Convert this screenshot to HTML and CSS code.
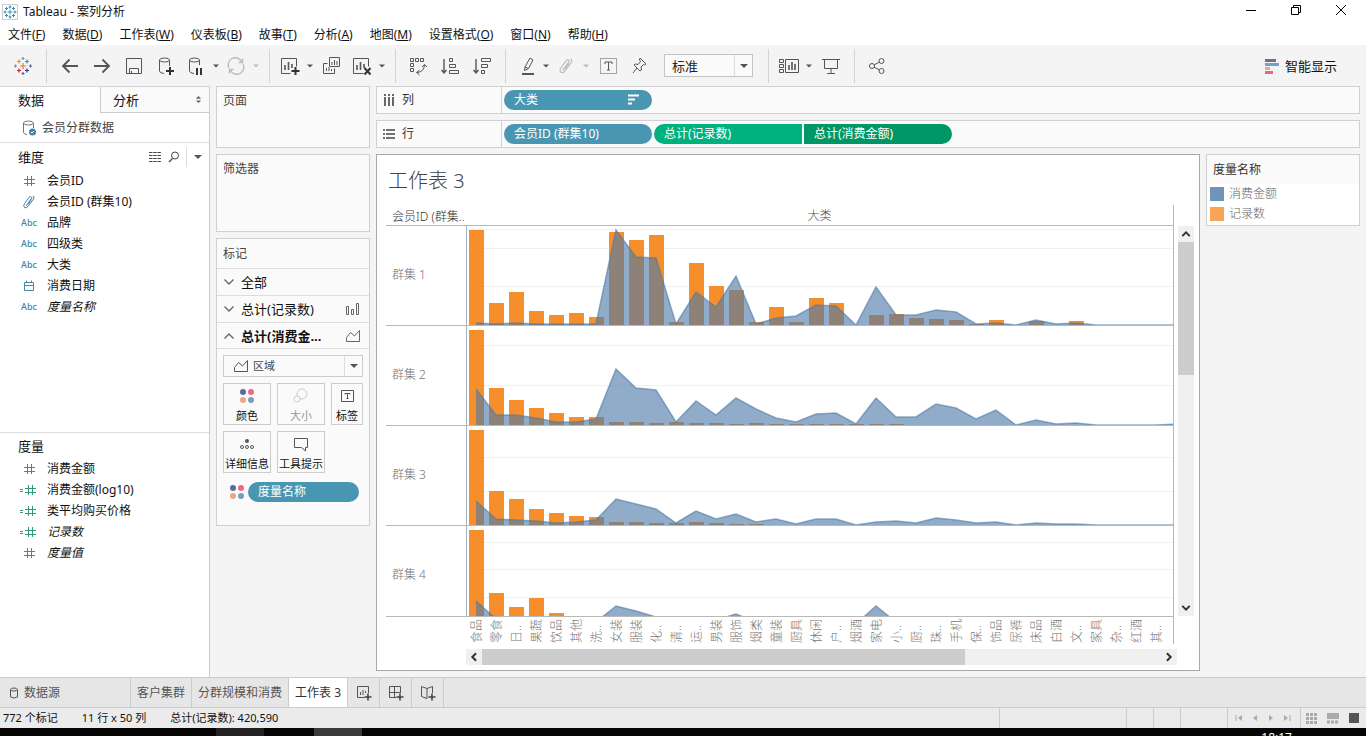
FILE: index.html
```html
<!DOCTYPE html>
<html lang="zh-CN">
<head>
<meta charset="utf-8">
<title>Tableau - 案列分析</title>
<link rel="stylesheet" href="styles.css">
</head>
<body>
<svg class="defs" aria-hidden="true">
  <symbol id="hash" viewBox="0 0 12 12"><path d="M4.500 1V11M8.500 1V11M1 4.500H12M1 8.500H12" fill="none" stroke="currentColor"/></symbol>
  <symbol id="calc" viewBox="0 0 18 12"><path d="M8.500 1V11M12.500 1V11M5 4.500H16M5 8.500H16M0 5.500H3M0 7.500H3" fill="none" stroke="currentColor"/></symbol>
  <symbol id="clip" viewBox="0 0 14 14"><path d="M4 11L9 4Q10.500 2.500 9.500 2Q8 1 7 2.500L2.500 8.500Q1 11 2.500 12.500Q4.500 13.500 6 11.500L11.500 4Q13 1.500 11 .8M6 9.500L9.500 4.500" fill="none" stroke="currentColor"/></symbol>
  <symbol id="caret" viewBox="0 0 8 8"><path d="M0 2H8L4 6Z" fill="currentColor"/></symbol>
  <symbol id="dots" viewBox="0 0 16 16"><circle cx="4" cy="4" r="3" fill="#5b6c99"/><circle cx="12" cy="4" r="3" fill="#ea6b7e"/><circle cx="4" cy="12" r="3" fill="#f0a57c"/><circle cx="12" cy="12" r="3" fill="#7b9cc0"/></symbol>
  <symbol id="area" viewBox="0 0 16 14"><path d="M1.500 12.500V8.500L5.500 3.500L9.500 7L14.500 1.500V12.500Z" fill="none" stroke="currentColor"/></symbol>
  <symbol id="down" viewBox="0 0 12 12"><path d="M1.500 3.500L6 8L10.500 3.500" fill="none" stroke="currentColor"/></symbol>
</svg>

<header class="titlebar">
  <svg class="app-icon" viewBox="0 0 16 16"><path d="M.5 15.500V.5H15.500V15.500Z" fill="#fff" stroke="#ccc"/><path d="M8 5.500V10.500M5.500 8H10.500M8 1.500V4.500M6.500 3H9.500M8 11.500V14.500M6.500 13H9.500M1.500 8H4.500M3 6.500V9.500M11.500 8H14.500M13 6.500V9.500M4.500 3V6M3 4.500H6M11.500 3V6M10 4.500H13M4.500 10V13M3 11.500H6M11.500 10V13M10 11.500H13" stroke="#3e8ab0" fill="none"/></svg>
  <h1>Tableau - 案列分析</h1>
  <div class="window-buttons">
    <button aria-label="最小化"><svg viewBox="0 0 12 12"><path d="M1 6.500H11" stroke="#000"/></svg></button>
    <button aria-label="还原"><svg viewBox="0 0 12 12"><path d="M1.500 3.500H8.500V10.500H1.500ZM3.500 3.500V1.500H10.500V8.500H8.500" fill="none" stroke="#000"/></svg></button>
    <button aria-label="关闭"><svg viewBox="0 0 12 12"><path d="M1 1L11 11M11 1L1 11" stroke="#000"/></svg></button>
  </div>
</header>

<nav class="menubar">
  <button>文件(<u>F</u>)</button><button>数据(<u>D</u>)</button><button>工作表(<u>W</u>)</button><button>仪表板(<u>B</u>)</button><button>故事(<u>T</u>)</button><button>分析(<u>A</u>)</button><button>地图(<u>M</u>)</button><button>设置格式(<u>O</u>)</button><button>窗口(<u>N</u>)</button><button>帮助(<u>H</u>)</button>
</nav>

<div class="toolbar">
  <button class="tool home" aria-label="开始页面"><svg viewBox="0 0 20 20"><g fill="none" stroke-width="1.200"><path d="M10 7V13M7 10H13" stroke="#e8762d"/><path d="M6 3.500V7.500M4 5.500H8" stroke="#eb912c"/><path d="M14 3.500V7.500M12 5.500H16" stroke="#59879b"/><path d="M6 12.500V16.500M4 14.500H8" stroke="#c72035"/><path d="M14 12.500V16.500M12 14.500H16" stroke="#1f457e"/><path d="M10 1V4M8.500 2.500H11.500" stroke="#7099a6"/><path d="M10 16V19M8.500 17.500H11.500" stroke="#5b6591"/><path d="M2.500 8.500V11.500M1 10H4" stroke="#7c86a8"/><path d="M17.500 8.500V11.500M16 10H19" stroke="#5b6591"/></g></svg></button>
  <span class="sep first"></span>
  <button class="tool" aria-label="撤消"><svg viewBox="0 0 20 20"><path d="M18 10H3M9.500 3.500L3 10L9.500 16.500" stroke-width="1.800"/></svg></button>
  <button class="tool" aria-label="重做"><svg viewBox="0 0 20 20"><path d="M2 10H17M10.500 3.500L17 10L10.500 16.500" stroke-width="1.800"/></svg></button>
  <button class="tool" aria-label="保存"><svg viewBox="0 0 20 20"><path d="M2.500 2.500H17.500V17.500H2.500ZM5.500 17.500V12.500H14.500V17.500M7.500 15V17.500"/></svg></button>
  <button class="tool" aria-label="新建数据源"><svg viewBox="0 0 20 20"><path d="M8 17.500Q3.500 17 3.500 15V4M13.500 4V10"/><ellipse cx="8.500" cy="4" rx="5" ry="2"/><path d="M14 11V19M10 15H18" stroke="#333" stroke-width="2"/></svg></button>
  <button class="tool narrow" aria-label="暂停自动更新"><svg viewBox="0 0 20 20"><path d="M8 17.500Q3.500 17 3.500 15V4M13.500 4V9"/><ellipse cx="8.500" cy="4" rx="5" ry="2"/><path d="M11 12V19M15 12V19" stroke="#333" stroke-width="2"/></svg></button>
  <button class="caret" aria-label="更新选项"><svg><use href="#caret"/></svg></button>
  <button class="tool narrow dim" aria-label="运行更新"><svg viewBox="0 0 20 20"><path d="M3 12A7 7 0 0 1 15.500 5.500M17 8A7 7 0 0 1 4.500 14.500M16.500 2.500V6.500H12.500M3.500 17.500V13.500H7.500" stroke-width="1.400"/></svg></button>
  <button class="caret dim" aria-label="运行更新选项"><svg><use href="#caret"/></svg></button>
  <span class="sep"></span>
  <button class="tool narrow" aria-label="新建工作表"><svg viewBox="0 0 20 20"><path d="M10.500 17.500H1.500V2.500H16.500V10.500"/><path d="M5 14V9M8.500 14V6M12 12V8" stroke-width="1.600"/><path d="M15.500 11V19M11.500 15H19.500" stroke="#333" stroke-width="2"/></svg></button>
  <button class="caret" aria-label="新建选项"><svg><use href="#caret"/></svg></button>
  <button class="tool" aria-label="复制"><svg viewBox="0 0 20 20"><path d="M7.500 1.500H17.500V10.500H7.500ZM5.500 7.500H1.500V17.500H12.500V12.500M10 9V6M12.500 9V4M15 9V5M4.500 15V12M7 15V11M9.500 15V13"/></svg></button>
  <button class="tool narrow" aria-label="清除"><svg viewBox="0 0 20 20"><path d="M11.500 17.500H1.500V2.500H16.500V10.500"/><path d="M5 14V9M8.500 14V6M12 12V8" stroke-width="1.600"/><path d="M12.500 12L18.500 18.500M18.500 12L12.500 18.500" stroke="#333" stroke-width="2"/></svg></button>
  <button class="caret" aria-label="清除选项"><svg><use href="#caret"/></svg></button>
  <span class="sep"></span>
  <button class="tool" aria-label="交换行和列"><svg viewBox="0 0 20 20"><path d="M2.500 2.500H5.500V5.500H2.500ZM7.500 2.500H10.500V5.500H7.500ZM12.500 2.500H15.500V5.500H12.500ZM2.500 7.500H5.500V10.500H2.500ZM2.500 12.500H5.500V15.500H2.500ZM9 16.500Q16 16 16.500 9M14 11L16.500 8.500L19 11M11.500 14L8.500 16.500L11.500 19"/></svg></button>
  <button class="tool" aria-label="升序"><svg viewBox="0 0 20 20"><path d="M4 3V17M1.500 14L4 17L6.500 14" stroke-width="1.400"/><path d="M9.500 2.500H12.500V5.500H9.500ZM9.500 8.500H15.500V11.500H9.500ZM9.500 14.500H18.500V17.500H9.500Z"/></svg></button>
  <button class="tool" aria-label="降序"><svg viewBox="0 0 20 20"><path d="M4 3V17M1.500 14L4 17L6.500 14" stroke-width="1.400"/><path d="M9.500 2.500H18.500V5.500H9.500ZM9.500 8.500H15.500V11.500H9.500ZM9.500 14.500H12.500V17.500H9.500Z"/></svg></button>
  <span class="sep"></span>
  <button class="tool narrow" aria-label="突出显示"><svg viewBox="0 0 20 20"><path d="M9 11L14 2L17 4L12.500 12.500L8.500 14.500ZM9 11L12.500 12.500"/><path d="M6 18H18" stroke-width="2"/></svg></button>
  <button class="caret" aria-label="突出显示选项"><svg><use href="#caret"/></svg></button>
  <button class="tool narrow dim" aria-label="组成员"><svg class="clip"><use href="#clip"/></svg></button>
  <button class="caret dim" aria-label="组选项"><svg><use href="#caret"/></svg></button>
  <button class="tool" aria-label="显示标记标签"><svg viewBox="0 0 20 20"><path d="M2.500 2.500H18.500V17.500H2.500Z" stroke-dasharray="1 1"/><path d="M7 8V6H14V8M10.500 6V14M9 14H12"/></svg></button>
  <button class="tool" aria-label="固定轴"><svg viewBox="0 0 20 20"><path d="M10 2L16 8L14.500 9L13.500 8.500L11 11L11.500 14L10 15L4 9L5.500 8L8 8.500L10.500 5.500L9.500 4ZM7 12L3 17"/></svg></button>
  <label class="fit"><select aria-label="适合方式"><option>标准</option></select><span class="drop"><svg><use href="#caret"/></svg></span></label>
  <span class="sep"></span>
  <button class="tool narrow" aria-label="显示/隐藏卡"><svg class="wide" viewBox="0 0 22 20"><path d="M1.500 3.500H5.500V6.500H1.500ZM1.500 8.500H5.500V11.500H1.500ZM1.500 13.500H5.500V16.500H1.500ZM7.500 3.500H20.500V16.500H7.500Z"/><path d="M11 14V9M14 14V6M17 14V8" stroke-width="1.600"/></svg></button>
  <button class="caret" aria-label="卡选项"><svg><use href="#caret"/></svg></button>
  <button class="tool" aria-label="演示模式"><svg viewBox="0 0 20 20"><path d="M1 3.500H19M3.500 3.500V12.500H16.500V3.500M10 12.500V17.500M6 17.500H14"/></svg></button>
  <span class="sep"></span>
  <button class="tool" aria-label="共享"><svg viewBox="0 0 20 20"><circle cx="5" cy="10" r="2.500"/><circle cx="14.500" cy="5" r="2.500"/><circle cx="14.500" cy="15" r="2.500"/><path d="M7.200 8.800L12.300 6.200M7.200 11.200L12.300 13.800"/></svg></button>
  <button class="showme"><svg viewBox="0 0 16 16"><path d="M1 2.500H12" stroke="#7a6a8c"/><path d="M1 6.500H15" stroke="#6fa3c0"/><path d="M1 10.500H6" stroke="#f3a394"/><path d="M1 14.500H9" stroke="#e8677a"/></svg>智能显示</button>
</div>

<main class="workspace">
  <aside class="sidebar">
    <div class="side-tabs">
      <button class="side-tab active">数据</button>
      <button class="side-tab">分析<svg viewBox="0 0 8 10"><path d="M1 4L4 1L7 4ZM1 6L4 9L7 6Z" fill="#666"/></svg></button>
    </div>
    <button class="source"><svg viewBox="0 0 16 16"><path d="M6 14.500Q2.500 14 2.500 12.500V3M12.500 3V8" fill="none" stroke="#777"/><ellipse cx="7.500" cy="3" rx="5" ry="2" fill="none" stroke="#777"/><circle cx="11.500" cy="12" r="3.500" fill="#3f86ad"/><path d="M10 12L11 13L13 11" fill="none" stroke="#fff"/></svg>会员分群数据</button>
    <section class="dims">
      <div class="side-head"><h2>维度</h2>
        <button aria-label="查看数据"><svg viewBox="0 0 12 12"><path d="M0 1.500H12M0 4.500H12M0 7.500H12M0 10.500H12" stroke="#444" stroke-dasharray="3.500 .7"/></svg></button>
        <button aria-label="查找字段"><svg viewBox="0 0 12 12"><circle cx="7" cy="4.500" r="3.500" fill="none" stroke="#444"/><path d="M4.500 7.500L1 11" stroke="#444" stroke-width="1.300"/></svg></button>
        <button class="side-menu" aria-label="字段菜单"><svg><use href="#caret"/></svg></button>
      </div>
      <ul class="fields blue">
        <li><span class="fi"><svg class="h"><use href="#hash"/></svg></span>会员ID</li>
        <li><span class="fi"><svg class="c"><use href="#clip"/></svg></span>会员ID (群集10)</li>
        <li><span class="fi">Abc</span>品牌</li>
        <li><span class="fi">Abc</span>四级类</li>
        <li><span class="fi">Abc</span>大类</li>
        <li><span class="fi"><svg class="h" viewBox="0 0 12 12"><path d="M1.500 2.500H10.500V10.500H1.500ZM1.500 5.500H10.500M3.500 .5V2.500M8.500 .5V2.500" fill="none" stroke="currentColor"/></svg></span>消费日期</li>
        <li><span class="fi">Abc</span><em>度量名称</em></li>
      </ul>
    </section>
    <section class="measures">
      <div class="side-head"><h2>度量</h2></div>
      <ul class="fields green">
        <li><span class="fi"><svg class="h"><use href="#hash"/></svg></span>消费金额</li>
        <li><span class="fi"><svg class="k"><use href="#calc"/></svg></span>消费金额(log10)</li>
        <li><span class="fi"><svg class="k"><use href="#calc"/></svg></span>类平均购买价格</li>
        <li><span class="fi"><svg class="k"><use href="#calc"/></svg></span><em>记录数</em></li>
        <li><span class="fi"><svg class="h"><use href="#hash"/></svg></span><em>度量值</em></li>
      </ul>
    </section>
  </aside>

  <div class="cards">
    <section class="card pages"><h3>页面</h3></section>
    <section class="card filters"><h3>筛选器</h3></section>
    <section class="card marks">
      <h3>标记</h3>
      <button class="mark-row"><svg class="chev"><use href="#down"/></svg><span>全部</span></button>
      <button class="mark-row"><svg class="chev"><use href="#down"/></svg><span>总计(记录数)</span><svg class="kind" viewBox="0 0 16 14"><path d="M1.500 4.500H3.500V12.500H1.500ZM6.500 7.500H8.500V12.500H6.500ZM11.500 1.500H13.500V12.500H11.500Z" fill="none" stroke="currentColor"/></svg></button>
      <button class="mark-row open"><svg class="chev"><use href="#down"/></svg><span>总计(消费金...</span><svg class="kind"><use href="#area"/></svg></button>
      <div class="mark-body">
        <label class="mark-type"><svg class="kind"><use href="#area"/></svg><select aria-label="标记类型"><option>区域</option></select><span class="drop"><svg><use href="#caret"/></svg></span></label>
        <div class="mark-buttons">
          <button><svg><use href="#dots"/></svg>颜色</button>
          <button class="off"><svg viewBox="0 0 16 16"><circle cx="9" cy="6" r="5" fill="none" stroke="currentColor"/><circle cx="4" cy="11" r="3" fill="#fafafa" stroke="currentColor"/></svg>大小</button>
          <button class="small"><svg viewBox="0 0 16 16"><path d="M2.500 2.500H14.500V13.500H2.500ZM6 6.500V5.500H11V6.500M8.500 5.500V10.500M7.500 10.500H9.500" fill="none" stroke="currentColor"/></svg>标签</button>
          <button><svg viewBox="0 0 16 16"><circle cx="8" cy="5" r="2" fill="currentColor"/><g fill="none" stroke="currentColor"><circle cx="3" cy="11" r="1.500"/><circle cx="8" cy="11" r="1.500"/><circle cx="13" cy="11" r="1.500"/></g></svg>详细信息</button>
          <button><svg viewBox="0 0 16 16"><path d="M1.500 2.500H14.500V11.500H12.500V15L8.500 11.500H1.500Z" fill="none" stroke="currentColor"/></svg>工具提示</button>
        </div>
        <div class="mark-pill"><svg><use href="#dots"/></svg><button class="pill blue">度量名称</button></div>
      </div>
    </section>
  </div>

  <div class="center">
    <div class="shelf">
      <div class="shelf-name"><svg viewBox="0 0 12 12"><path d="M2 0V2M2 3V12M6 0V2M6 3V12M10 0V2M10 3V12" stroke="#444" stroke-width="1.600"/></svg>列</div>
      <div class="pills"><button class="pill blue">大类<svg viewBox="0 0 12 12"><path d="M0 1.500H11M0 5.500H7M0 9.500H4" stroke="#fff" stroke-width="1.800"/></svg></button></div>
    </div>
    <div class="shelf">
      <div class="shelf-name"><svg viewBox="0 0 12 12"><path d="M0 2H2M3 2H12M0 6H2M3 6H12M0 10H2M3 10H12" stroke="#444" stroke-width="1.600"/></svg>行</div>
      <div class="pills"><button class="pill blue">会员ID (群集10)</button><button class="pill green left">总计(记录数)</button><button class="pill deep right">总计(消费金额)</button></div>
    </div>
    <div class="view">
      <section class="sheet">
        <h2 class="sheet-title">工作表 3</h2>
        <div class="pane">
          <div class="row-title">会员ID (群集..</div>
          <div class="col-title">大类</div>
          <div class="rows" id="rows"></div>
          <div class="vscroll">
            <button aria-label="向上滚动"><svg class="flip"><use href="#down"/></svg></button>
            <span class="vthumb"></span>
            <button aria-label="向下滚动"><svg><use href="#down"/></svg></button>
          </div>
          <div class="cats" id="cats"></div>
          <div class="hscroll">
            <button aria-label="向左滚动"><svg class="west"><use href="#down"/></svg></button>
            <span class="hthumb"></span>
            <button aria-label="向右滚动"><svg class="east"><use href="#down"/></svg></button>
          </div>
        </div>
      </section>
      <aside class="legend">
        <h3>度量名称</h3>
        <ul><li><span class="sw sw-blue"></span>消费金额</li><li><span class="sw sw-orange"></span>记录数</li></ul>
      </aside>
    </div>
  </div>
</main>

<nav class="sheet-tabs">
  <button class="data-tab"><svg viewBox="0 0 12 12"><path d="M2.500 2.500V10Q6 12 9.500 10V2.500" fill="none" stroke="#555"/><ellipse cx="6" cy="2.500" rx="3.500" ry="1.500" fill="none" stroke="#555"/></svg>数据源</button>
  <button>客户集群</button><button>分群规模和消费</button><button class="active">工作表 3</button>
  <button class="new" aria-label="新建工作表"><svg viewBox="0 0 16 16"><path d="M8.500 12.500H1.500V1.500H12.500V8M4.500 10V7M7 10V5M9.500 8V6" fill="none" stroke="#555"/><path d="M12 8.500V15.500M8.500 12H15.500" stroke="#444" stroke-width="1.600"/></svg></button>
  <button class="new" aria-label="新建仪表板"><svg viewBox="0 0 16 16"><path d="M8.500 12.500H1.500V1.500H12.500V8M1.500 7.500H12.500M6.500 1.500V12.500" fill="none" stroke="#555"/><path d="M12 8.500V15.500M8.500 12H15.500" stroke="#444" stroke-width="1.600"/></svg></button>
  <button class="new" aria-label="新建故事"><svg viewBox="0 0 16 16"><path d="M7 13.500L1.500 11.500V1.500L7 3.500L12.500 1.500V8M7 3.500V13.500" fill="none" stroke="#555"/><path d="M12 8.500V15.500M8.500 12H15.500" stroke="#444" stroke-width="1.600"/></svg></button>
</nav>

<footer class="status">
  <span>772 个标记</span><span>11 行 x 50 列</span><span>总计(记录数): 420,590</span>
  <div class="status-right">
    <span class="cell w127"></span><span class="cell w27"></span><span class="cell w27"></span><span class="cell w47"></span>
    <div class="cell navs">
      <button aria-label="第一张"><svg viewBox="0 0 8 8"><path d="M1 1V7" stroke="#aaa"/><path d="M7 1V7L3 4Z" fill="#aaa"/></svg></button>
      <button aria-label="上一张"><svg viewBox="0 0 8 8"><path d="M6 1V7L2 4Z" fill="#aaa"/></svg></button>
      <button aria-label="下一张"><svg viewBox="0 0 8 8"><path d="M2 1V7L6 4Z" fill="#aaa"/></svg></button>
      <button aria-label="最后一张"><svg viewBox="0 0 8 8"><path d="M7 1V7" stroke="#aaa"/><path d="M1 1V7L5 4Z" fill="#aaa"/></svg></button>
    </div>
    <div class="cell modes">
      <button aria-label="工作表排序程序"><svg viewBox="0 0 12 12"><path d="M0 2.500H12M0 6.500H12M0 10.500H12" stroke="#aaa" stroke-width="3" stroke-dasharray="3 1"/></svg></button>
      <button aria-label="显示缩略图"><svg viewBox="0 0 12 12"><path d="M0 1H12V7H0Z" fill="#aaa"/><path d="M0 10H12" stroke="#aaa" stroke-width="3" stroke-dasharray="3 1"/></svg></button>
      <button aria-label="显示标签"><svg viewBox="0 0 12 12"><path d="M1 1H11V11H1Z" fill="#555"/></svg></button>
    </div>
  </div>
</footer>
<div class="taskbar"><span class="task one"></span><span class="task two"></span><time>18:17</time></div>
<script src="chart.js"></script>
</body>
</html>
```
FILE: styles.css
```css
* { box-sizing: border-box; margin: 0; padding: 0; }
html, body { height: 100%; }
body {
  display: flex; flex-direction: column; overflow: hidden;
  font-family: "Noto Sans", "Noto Sans CJK SC", sans-serif;
  font-size: 12px; line-height: 18px; color: #111; background: #f4f4f4;
}
button, select { font: inherit; color: inherit; background: none; border: 0; }
ul { list-style: none; }
h1, h2, h3 { font-size: 12px; font-weight: 400; }
svg { display: block; flex: none; }
.defs { display: none; }

.titlebar { display: flex; align-items: center; height: 24px; flex: none; padding-left: 2px; background: #fff; }
.app-icon { width: 16px; height: 16px; margin-right: 5px; }
.window-buttons { display: flex; align-self: flex-start; margin-left: auto; padding-right: 3px; }
.window-buttons button { width: 45px; height: 20px; display: flex; align-items: center; justify-content: center; }
.window-buttons svg { width: 12px; height: 12px; }

.menubar { display: flex; align-items: center; gap: 17px; height: 21px; flex: none; padding-left: 8px; background: #fff; white-space: nowrap; }

.toolbar { display: flex; align-items: center; height: 41px; flex: none; color: #555; }
.tool { width: 32px; height: 28px; display: flex; align-items: center; justify-content: center; flex: none; }
.tool svg { width: 20px; height: 20px; fill: none; stroke: currentColor; }
.tool svg.wide { width: 22px; }
.tool svg.clip { width: 16px; height: 16px; }
.tool.narrow { width: 28px; }
.tool.home { width: 46px; }
.tool.home svg { stroke: none; }
.caret { width: 12px; height: 28px; display: flex; align-items: center; justify-content: center; flex: none; }
.caret svg { width: 6px; height: 6px; }
.dim { color: #bbb; }
.sep { width: 1px; height: 34px; margin: 0 6px 0 7px; background: #d4d4d4; flex: none; }
.sep.first { margin: 0 7px 0 0; }
.fit { display: flex; width: 89px; height: 23px; margin: 0 8px; border: 1px solid #c4c4c4; background: #fafafa; flex: none; color: #222; }
select { flex: 1; min-width: 0; appearance: none; outline: 0; }
.fit select { padding-left: 7px; font-size: 13px; }
.drop { width: 18px; display: flex; align-items: center; justify-content: center; border-left: 1px solid #ddd; color: #555; }
.drop svg { width: 8px; height: 8px; }
.showme { display: flex; align-items: center; gap: 5px; margin-left: auto; margin-right: 29px; font-size: 13px; color: #111; }
.showme svg { width: 16px; height: 16px; fill: none; stroke-width: 3; }

.workspace { display: flex; flex: 1; min-height: 0; }
.sidebar { width: 210px; flex: none; display: flex; flex-direction: column; background: #fff; border-right: 1px solid #ccc; border-top: 1px solid #d4d4d4; }
.side-tabs { display: flex; height: 26px; flex: none; }
.side-tab { flex: 1; display: flex; align-items: center; justify-content: space-between; padding: 0 7px 0 12px; font-size: 13px; background: #fafafa; border-left: 1px solid #ccc; border-bottom: 1px solid #ccc; }
.side-tab svg { width: 7px; height: 9px; }
.side-tab.active { flex: 0 0 100px; padding-left: 18px; background: #fff; border-color: transparent; border-left: 0; }
.source { display: flex; align-items: center; gap: 5px; height: 30px; flex: none; padding-left: 21px; color: #444; border-bottom: 1px solid #ddd; }
.source svg { width: 16px; height: 16px; }
.dims { flex: 1; min-height: 0; overflow: hidden; }
.measures { flex: 0 0 245px; border-top: 1px solid #ddd; }
.side-head { display: flex; align-items: center; height: 27px; padding-left: 18px; }
.measures .side-head { height: 25px; }
.side-head h2 { font-size: 13px; margin-right: auto; }
.side-head button { width: 19px; display: flex; justify-content: center; }
.side-head svg { width: 12px; height: 12px; }
.side-head .side-menu { width: 23px; height: 20px; align-items: center; margin-left: 3px; border-left: 1px solid #ddd; color: #555; }
.side-head .side-menu svg { width: 8px; height: 8px; }
.fields li { display: flex; align-items: center; gap: 9px; height: 21px; padding-left: 20px; }
.fi { width: 18px; display: flex; justify-content: center; font-size: 9px; font-weight: 500; }
.blue .fi { color: #4286a8; }
.green .fi { color: #2f9a78; }
.h { width: 12px; height: 12px; }
.c { width: 14px; height: 14px; }
.k { width: 18px; height: 12px; }

.cards { width: 154px; flex: none; margin-left: 6px; display: flex; flex-direction: column; gap: 6px; }
.card { background: #fafafa; border: 1px solid #d0d0d0; color: #444; }
.card h3 { padding: 5px 6px; }
.pages { height: 62px; }
.filters { height: 78px; }
.marks { height: 288px; }
.marks h3 { height: 29px; line-height: 20px; }
.mark-row { display: flex; align-items: center; gap: 6px; width: 100%; height: 27px; padding: 0 8px 0 6px; border-top: 1px solid #ddd; font-size: 13px; color: #111; text-align: left; }
.mark-row span { flex: 1; white-space: nowrap; }
.mark-row svg { color: #666; }
.chev { width: 12px; height: 12px; stroke-width: 1.4; }
.kind { width: 16px; height: 14px; color: #555; }
.open { height: 26px; font-weight: 700; }
.open .kind { stroke-width: 1; }
.open .chev { transform: rotate(180deg); }
.mark-body { padding: 6px; border-top: 1px solid #ddd; }
.mark-type { display: flex; align-items: center; height: 22px; padding-left: 9px; border: 1px solid #ccc; }
.mark-type select { padding-left: 4px; font-size: 11px; }
.mark-type .drop { height: 20px; }
.mark-buttons { display: grid; grid-template-columns: 48px 48px 32px; gap: 6px; margin: 6px 0 9px; }
.mark-buttons button { height: 42px; display: flex; flex-direction: column; align-items: center; justify-content: space-between; padding-top: 4px; border: 1px solid #ccc; font-size: 11px; line-height: 16px; color: #111; white-space: nowrap; }
.mark-buttons svg { width: 16px; height: 16px; color: #555; }
.mark-buttons .off { color: #999; }
.mark-buttons .off svg { color: #ccc; }
.mark-pill { display: flex; align-items: center; gap: 3px; padding: 0 4px 0 6px; }
.mark-pill svg { width: 16px; height: 16px; }
.pill { display: flex; align-items: center; justify-content: space-between; width: 148px; height: 20px; padding: 0 12px 0 10px; border-radius: 10px; color: #fff; white-space: nowrap; }
.mark-pill .pill { flex: 1; width: auto; }
.pill svg { width: 12px; height: 12px; }
.pill.blue { background: #4996b2; }
.pill.green { background: #00b180; }
.pill.deep { background: #009767; }
.pill.left { border-radius: 10px 0 0 10px; }
.pill.right { border-radius: 0 10px 10px 0; }

.center { flex: 1; min-width: 0; display: flex; flex-direction: column; gap: 6px; margin: 0 6px; }
.shelf { display: flex; height: 28px; flex: none; background: #fafafa; border: 1px solid #d0d0d0; }
.shelf-name { display: flex; align-items: center; gap: 7px; width: 125px; padding-left: 6px; border-right: 1px solid #d0d0d0; color: #333; }
.shelf-name svg { width: 12px; height: 12px; }
.pills { display: flex; align-items: center; gap: 2px; padding-left: 2px; }
.view { display: flex; align-items: flex-start; gap: 6px; flex: 1; min-height: 0; }
.sheet { flex: 1; min-width: 0; height: calc(100% - 6px); display: flex; flex-direction: column; background: #fff; border: 1px solid #a8a8a8; padding: 0 5px 5px 9px; }
.sheet-title { height: 50px; flex: none; padding-left: 2px; font-size: 20px; line-height: 52px; font-weight: 300; color: #444; }
.pane { flex: 1; min-height: 0; display: grid; grid-template-columns: 80px minmax(0, 1fr) 20px; grid-template-rows: 21px minmax(0, 1fr) 28px 5px 16px; color: #777; font-weight: 300; }
.row-title { padding-left: 6px; border-bottom: 1px solid #b8b8b8; color: #333; white-space: nowrap; line-height: 24px; }
.col-title { text-align: center; border-bottom: 1px solid #b8b8b8; border-right: 1px solid #b8b8b8; color: #555; line-height: 22px; }
.rows { grid-column: 1 / 3; overflow: hidden; border-right: 1px solid #b8b8b8; }
.row { display: flex; height: 100px; border-bottom: 1px solid #b8b8b8; }
.row-name { width: 80px; flex: none; padding-left: 6px; line-height: 98px; color: #777; }
.plot { flex: 1; min-width: 0; overflow: hidden; border-left: 1px solid #a9b5c0; }
.plot svg { height: 99px; }
.grid { stroke: #f1f1f1; }
.bar { fill: #f68e2b; }
.shape { fill: #4e79a7; fill-opacity: .62; }
.line { fill: none; stroke: #4e79a7; stroke-opacity: .6; stroke-width: 1.5; }
.vscroll { display: flex; flex-direction: column; margin-left: 4px; background: #f0f0f0; }
.vscroll button, .hscroll button { width: 16px; height: 16px; flex: none; display: flex; align-items: center; justify-content: center; color: #333; }
.vscroll svg, .hscroll svg { width: 10px; height: 10px; stroke-width: 2.4; }
.vscroll button:last-child { margin-top: auto; }
.vthumb { flex: 0 0 34%; background: #cdcdcd; }
.flip { transform: rotate(180deg); }
.west { transform: rotate(90deg); }
.east { transform: rotate(-90deg); }
.cats { grid-column: 1 / 3; display: flex; overflow: hidden; padding-left: 81px; border-top: 1px solid #b8b8b8; border-right: 1px solid #b8b8b8; }
.cats span { width: 20px; flex: none; writing-mode: vertical-rl; text-orientation: sideways; transform: rotate(180deg); line-height: 20px; padding-top: 1px; white-space: nowrap; color: #777; }
.hscroll { grid-column: 2 / 4; grid-row: 5; display: flex; margin-right: 17px; background: #f0f0f0; }
.hthumb { width: 68%; background: #cdcdcd; }
.hscroll button:last-child { margin-left: auto; }
.legend { width: 154px; flex: none; background: #fff; border: 1px solid #d0d0d0; color: #666; }
.legend h3 { height: 29px; padding: 5px 6px; line-height: 20px; background: #fafafa; color: #333; }
.legend li { display: flex; align-items: center; gap: 5px; height: 20px; padding-left: 3px; font-weight: 300; line-height: 20px; }
.legend ul { padding-bottom: 1px; }
.sw { width: 14px; height: 14px; }
.sw-blue { background: #6f93b9; }
.sw-orange { background: #f8a357; }

.sheet-tabs { display: flex; height: 31px; flex: none; background: #e6e6e6; border-top: 1px solid #ccc; border-bottom: 1px solid #ccc; color: #555; }
.sheet-tabs button { padding: 0 6px; border-right: 1px solid #ccc; white-space: nowrap; }
.sheet-tabs .data-tab { width: 131px; display: flex; align-items: center; gap: 4px; padding-left: 8px; }
.sheet-tabs svg { width: 16px; height: 16px; }
.data-tab svg { width: 12px; height: 12px; }
.sheet-tabs .active { background: #fff; color: #333; }
.sheet-tabs .new { width: 32px; padding: 0 8px; }
.status { display: flex; gap: 24px; height: 20px; flex: none; align-items: center; padding-left: 3px; background: #ebebeb; font-size: 11px; white-space: nowrap; }
.status-right { display: flex; margin-left: auto; align-self: stretch; }
.cell { border-left: 1px solid #ccc; }
.w127 { width: 127px; }
.w27 { width: 27px; }
.w47 { width: 47px; }
.navs, .modes { display: flex; align-items: center; }
.navs { width: 73px; padding-left: 3px; }
.navs button { width: 16px; display: flex; justify-content: center; }
.navs svg { width: 8px; height: 8px; }
.modes { width: 66px; }
.modes button { width: 21px; display: flex; justify-content: center; }
.modes svg { width: 12px; height: 12px; }
.taskbar { display: flex; height: 8px; flex: none; overflow: hidden; background: #050505; padding-left: 216px; }
.task { width: 48px; height: 8px; }
.one { background: #222; }
.two { background: #3a3a3a; margin-left: 50px; }
.taskbar time { margin: 1px 74px 0 auto; color: #fff; }
```
FILE: chart.js
```js
const STEP = 20;
const BASE = 99;
const COUNT = 36;

const groups = [
  { name: '群集 1', grid: [3, 22, 60],
    bars: [95, 22, 33, 14, 10, 12, 8, 93, 85, 90, 3, 62, 39, 35, 3, 18, 3, 27, 22, 0, 10, 11, 7, 6, 5, 1, 5, 0, 4, 0, 4],
    area: [2, 1, 2, 1, 1, 1, 1, 95, 68, 67, 1, 33, 18, 49, 1, 7, 9, 20, 19, 0, 38, 10, 10, 15, 13, 1, 2, 0, 5, 1, 2] },
  { name: '群集 2', grid: [19, 59],
    bars: [95, 37, 25, 17, 12, 8, 8, 3, 3, 2, 3, 2, 2, 1, 2, 1, 1, 1, 1, 1, 1, 1],
    area: [36, 10, 10, 7, 3, 3, 6, 56, 37, 35, 3, 24, 10, 27, 16, 7, 3, 11, 12, 1, 27, 8, 8, 21, 17, 6, 15, 0, 5, 1, 2, 0, 0, 0, 0, 1] },
  { name: '群集 3', grid: [31, 65],
    bars: [95, 34, 26, 16, 12, 9, 8, 3, 3, 2, 2, 3, 2, 1, 1],
    area: [24, 6, 5, 4, 2, 3, 5, 26, 21, 16, 2, 14, 6, 11, 3, 6, 1, 6, 6, 0, 3, 4, 2, 7, 5, 2, 3, 0, 2, 1, 1] },
  { name: '群集 4', grid: [16, 43, 71],
    bars: [95, 32, 18, 27, 12, 6, 5],
    area: [24, 6, 5, 4, 2, 2, 3, 19, 14, 8, 1, 7, 5, 11, 3, 4, 2, 6, 6, 1, 19, 3, 3, 6, 5] }
];

const categories = ['食品', '零食', '日..', '果蔬', '饮品', '其他', '洗..', '女装', '服装', '化..', '清..', '运..',
  '男装', '服饰', '烟类', '童装', '厨具', '休闲', '户..', '烟酒', '家电', '小..', '厨..', '珠..', '手机', '保..',
  '饰品', '尿裤', '床品', '白酒', '文..', '家具', '杂..', '红酒', '其..'];

function plot(group) {
  const width = COUNT * STEP;
  const grid = group.grid.map(y => `<path class="grid" d="M0 ${y}.5H${width}"/>`).join('');
  const bars = group.bars.map((h, i) =>
    h ? `<rect class="bar" x="${2 + i * STEP}" y="${BASE - h}" width="15" height="${h}"/>` : '').join('');
  const points = Array.from({ length: COUNT }, (_, i) =>
    `${9 + i * STEP} ${BASE - (group.area[i] || 0)}`).join('L');
  const last = 9 + (COUNT - 1) * STEP;
  return `<svg width="${width}" height="99">${grid}${bars}` +
    `<path class="shape" d="M9 ${BASE}L${points}L${last} ${BASE}Z"/>` +
    `<path class="line" d="M${points}"/></svg>`;
}

document.getElementById('rows').innerHTML = groups.map(g =>
  `<div class="row"><div class="row-name">${g.name}</div><div class="plot">${plot(g)}</div></div>`).join('');
document.getElementById('cats').innerHTML = categories.map(c => `<span>${c}</span>`).join('');
```
